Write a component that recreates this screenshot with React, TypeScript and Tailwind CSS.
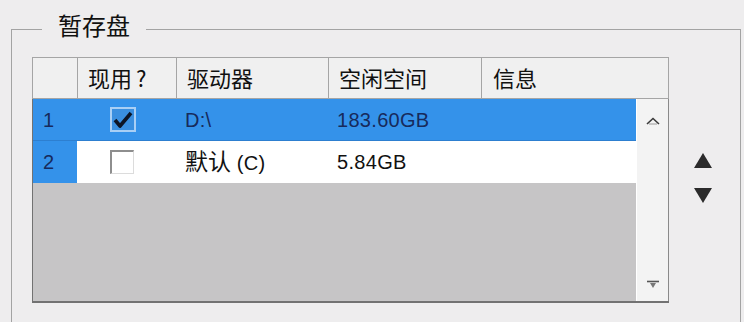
import React from 'react';

const rows = [
  { n: '1', used: true, drive: 'D:\\', cjk: '', free: '183.60GB', selected: true },
  { n: '2', used: false, drive: ' (C)', cjk: '默认', free: '5.84GB', selected: false },
];

function CheckBox({ checked, selected }: { checked: boolean; selected: boolean }) {
  if (selected) {
    return (
      <div className="w-[26px] h-[25px] border-2 border-[#a9cff5] bg-[#3a8fe0] flex items-center justify-center">
        {checked && (
          <svg width="20" height="18" viewBox="0 0 20 18">
            <path d="M2 9 L7 15 L18 2" fill="none" stroke="#0d1424" strokeWidth="3.6" strokeLinejoin="round" />
          </svg>
        )}
      </div>
    );
  }
  return <div className="w-[24px] h-[24px] bg-white border-l-2 border-t-2 border-[#8e8e8e] border-r border-b border-r-[#dcdcdc] border-b-[#dcdcdc]" />;
}

export default function App() {
  return (
    <div className="w-[744px] h-[322px] overflow-hidden bg-[#eeedee] font-['Liberation_Sans','Noto_Sans_CJK_SC',sans-serif] text-[#111]">
      <fieldset className="ml-[11px] mt-[14px] w-[730px] h-[340px] border border-[#a3a3a3]">
        <legend className="ml-[30px] px-[16px] pb-[8px] text-[24px] leading-[22px] font-['Noto_Sans_CJK_SC',sans-serif]">
          暂存盘
        </legend>

        <div className="flex pl-[20px] pt-[13px]">
          {/* grid */}
          <div className="w-[637px]">
            {/* header */}
            <div className="flex h-[42px] border-t border-l border-[#a5a5a5] bg-[#f0f0f0] text-[22px] leading-[26px] font-['Noto_Sans_CJK_SC',sans-serif]">
              <div className="w-[45px] border-r border-b border-[#a5a5a5]" />
              <div className="w-[99px] border-r border-b border-[#a5a5a5] pl-[10px] pb-[3px] flex items-center">
                现用<span className="ml-[4px]">?</span>
              </div>
              <div className="w-[152px] border-r border-b border-[#a5a5a5] pl-[10px] pb-[3px] flex items-center">驱动器</div>
              <div className="w-[153px] border-r border-b border-[#a5a5a5] pl-[10px] pb-[3px] flex items-center">空闲空间</div>
              <div className="flex-1 border-r border-b border-[#a5a5a5] pl-[11px] pb-[3px] flex items-center">信息</div>
            </div>

            {/* body */}
            <div className="flex h-[204px] border-l border-b-2 border-[#727272]">
              <div className="w-[603px] bg-[#c6c5c6] flex flex-col">
                {rows.map((r) => (
                  <div
                    key={r.n}
                    className={`flex h-[42px] items-center text-[20px] tracking-[0.3px] ${r.selected ? 'bg-[#3492ea] text-[#172a5c] border-b border-[#2d7fd0]' : 'bg-white text-[#111]'}`}
                  >
                    <div className="w-[44px] h-full bg-[#3492ea] text-[#172a5c] pl-[10px] flex items-center">{r.n}</div>
                    <div className="w-[100px] pl-[33px] flex items-center">
                      <CheckBox checked={r.used} selected={r.selected} />
                    </div>
                    <div className="w-[152px] pl-[8px] whitespace-pre">
                      {r.cjk && <span className="text-[23px] tracking-normal">{r.cjk}</span>}
                      {r.drive}
                    </div>
                    <div className="w-[153px] pl-[8px]">{r.free}</div>
                    <div className="flex-1" />
                  </div>
                ))}
              </div>
              <div className="w-[33px] bg-[#f3f3f3] border-l border-white border-r border-r-[#8a8a8a] flex flex-col items-center justify-between pt-[18px] pb-[12px]">
                <svg width="14" height="8" viewBox="0 0 14 8">
                  <path d="M1 7 L7 1.5 L13 7" fill="none" stroke="#3a3a3a" strokeWidth="1.6" />
                  <path d="M3 7 H11" stroke="#9a9a9a" strokeWidth="1" />
                </svg>
                <svg width="14" height="9" viewBox="0 0 14 9">
                  <path d="M1 1.5 H13" stroke="#555" strokeWidth="1.6" />
                  <path d="M4 3 L7 8 L10 3 Z" fill="#777" />
                </svg>
              </div>
            </div>
          </div>

          {/* move buttons */}
          <div className="ml-[25px] pt-[96px] flex flex-col gap-[20px]">
            <svg width="18" height="15" viewBox="0 0 18 15">
              <polygon points="9,0 18,15 0,15" fill="#2b2b2b" />
            </svg>
            <svg width="18" height="15" viewBox="0 0 18 15">
              <polygon points="0,0 18,0 9,15" fill="#2b2b2b" />
            </svg>
          </div>
        </div>
      </fieldset>
    </div>
  );
}
